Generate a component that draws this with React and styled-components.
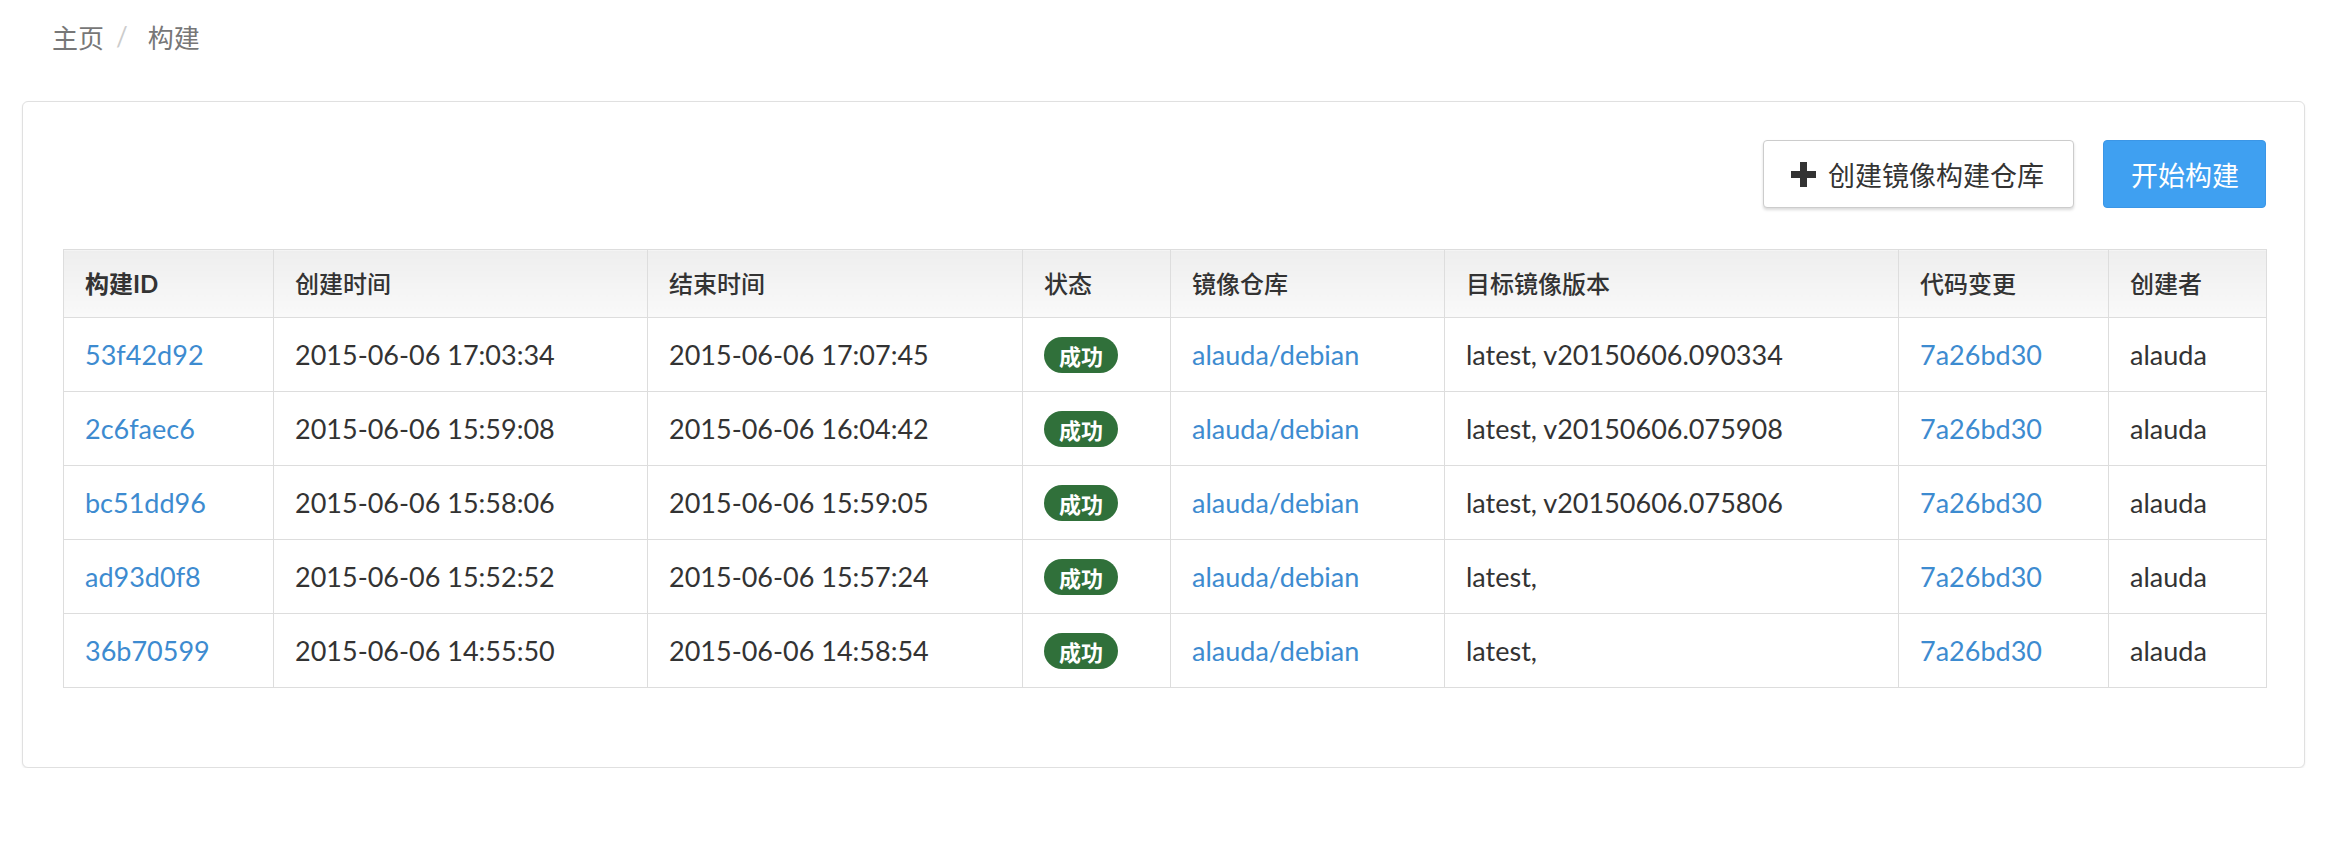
import React from 'react';
import styled, { createGlobalStyle } from 'styled-components';

const GlobalStyle = createGlobalStyle`
  body {
    margin: 0;
    background: #fff;
    font-family: "Lato", "Noto Sans CJK SC", sans-serif;
    color: #333;
  }
`;

const Page = styled.div`
  padding: 18px 35px 0 22px;
`;

const Breadcrumb = styled.div`
  display: flex;
  align-items: center;
  padding-left: 30px;
  height: 36px;
  font-family: "Noto Sans CJK SC", sans-serif;
  font-size: 26px;
  color: #777;
`;

const Crumb = styled.span`
  color: #777;
`;

const Divider = styled.span`
  color: #ccc;
  font-family: "Lato", sans-serif;
  padding: 0 20px 0 12px;
`;

const Panel = styled.div`
  margin-top: 47px;
  border: 1px solid #e0e0e0;
  border-radius: 6px;
  box-shadow: 0 1px 2px rgba(0, 0, 0, 0.08);
  padding: 38px 38px 39px 40px;
  background: #fff;
`;

const Toolbar = styled.div`
  display: flex;
  justify-content: flex-end;
  gap: 29px;
  margin-bottom: 41px;
`;

const Button = styled.button`
  display: flex;
  align-items: center;
  gap: 12px;
  height: 68px;
  padding: 0 ${({ primary }) => (primary ? 26 : 29)}px 0 ${({ primary }) => (primary ? 27 : 27)}px;
  border-radius: 4px;
  font-family: "Noto Sans CJK SC", sans-serif;
  font-size: 27px;
  cursor: pointer;
  border: 1px solid ${({ primary }) => (primary ? '#3b96e6' : '#ccc')};
  background: ${({ primary }) => (primary ? '#3fa0f1' : '#fff')};
  color: ${({ primary }) => (primary ? '#fff' : '#333')};
  box-shadow: ${({ primary }) => (primary ? 'none' : '0 2px 3px rgba(0,0,0,0.15)')};
`;

const Table = styled.table`
  width: 100%;
  table-layout: fixed;
  border-collapse: collapse;
  margin-bottom: 40px;
`;

const Th = styled.th`
  box-sizing: border-box;
  height: 68px;
  padding: 0 21px;
  text-align: left;
  vertical-align: middle;
  font-weight: ${({ strong }) => (strong ? 700 : 500)};
  font-size: 24px;
  line-height: 30px;
  border: 1px solid #ddd;
  background: linear-gradient(#eeeeee, #f9f9f9);
  color: #333;
`;

const Td = styled.td`
  box-sizing: border-box;
  height: 74px;
  padding: 0 21px;
  vertical-align: middle;
  font-size: 27px;
  line-height: 30px;
  border: 1px solid #ddd;
  color: #333;
  white-space: nowrap;
`;

const Link = styled.a`
  color: #3d8bd0;
  text-decoration: none;
`;

const Badge = styled.span`
  display: inline-flex;
  align-items: center;
  height: 36px;
  padding: 0 15px;
  border-radius: 18px;
  background: #30703a;
  color: #fff;
  font-family: "Noto Sans CJK SC", sans-serif;
  font-weight: 700;
  font-size: 22px;
  line-height: 1;
  vertical-align: middle;
`;

const PlusIcon = () => (
  <svg width="25" height="25" viewBox="0 0 25 25">
    <rect x="9" y="0" width="7" height="25" fill="#333" />
    <rect x="0" y="9" width="25" height="7" fill="#333" />
  </svg>
);

const cols = [210, 374, 375, 148, 274, 454, 210, 158];
const headers = ['构建ID', '创建时间', '结束时间', '状态', '镜像仓库', '目标镜像版本', '代码变更', '创建者'];

const builds = [
  { id: '53f42d92', start: '2015-06-06 17:03:34', end: '2015-06-06 17:07:45', tags: 'latest, v20150606.090334' },
  { id: '2c6faec6', start: '2015-06-06 15:59:08', end: '2015-06-06 16:04:42', tags: 'latest, v20150606.075908' },
  { id: 'bc51dd96', start: '2015-06-06 15:58:06', end: '2015-06-06 15:59:05', tags: 'latest, v20150606.075806' },
  { id: 'ad93d0f8', start: '2015-06-06 15:52:52', end: '2015-06-06 15:57:24', tags: 'latest,' },
  { id: '36b70599', start: '2015-06-06 14:55:50', end: '2015-06-06 14:58:54', tags: 'latest,' },
];

const App = () => (
  <Page>
    <GlobalStyle />
    <Breadcrumb>
      <Crumb>主页</Crumb>
      <Divider>/</Divider>
      <Crumb>构建</Crumb>
    </Breadcrumb>
    <Panel>
      <Toolbar>
        <Button>
          <PlusIcon />
          创建镜像构建仓库
        </Button>
        <Button primary>开始构建</Button>
      </Toolbar>
      <Table>
        <colgroup>
          {cols.map((w, i) => (
            <col key={i} style={{ width: w }} />
          ))}
        </colgroup>
        <thead>
          <tr>
            {headers.map((h, i) => (
              <Th key={h} strong={i === 0}>{h}</Th>
            ))}
          </tr>
        </thead>
        <tbody>
          {builds.map((b) => (
            <tr key={b.id}>
              <Td><Link href="#">{b.id}</Link></Td>
              <Td>{b.start}</Td>
              <Td>{b.end}</Td>
              <Td><Badge>成功</Badge></Td>
              <Td><Link href="#">alauda/debian</Link></Td>
              <Td>{b.tags}</Td>
              <Td><Link href="#">7a26bd30</Link></Td>
              <Td>alauda</Td>
            </tr>
          ))}
        </tbody>
      </Table>
    </Panel>
  </Page>
);

export default App;
